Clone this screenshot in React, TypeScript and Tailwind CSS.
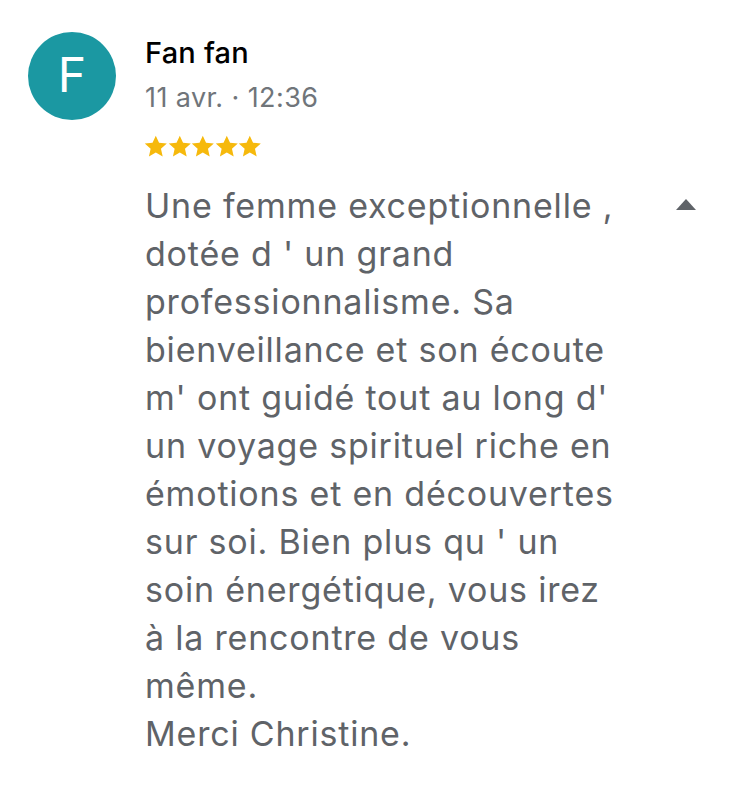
import React from "react";

const lines = [
  "Une femme exceptionnelle ,",
  "dotée d ' un grand",
  "professionnalisme. Sa",
  "bienveillance et son écoute",
  "m' ont guidé tout au long d'",
  "un voyage spirituel riche en",
  "émotions et en découvertes",
  "sur soi. Bien plus qu ' un",
  "soin énergétique, vous irez",
  "à la rencontre de vous",
  "même.",
  "Merci Christine.",
];

function Star() {
  return (
    <svg width="23.6" height="23" viewBox="0 0 24 23" className="shrink-0">
      <path
        d="M12 0.5l3.3 7.2 7.9.8-5.95 5.3 1.75 7.75L12 17.5 5 21.55l1.75-7.75L0.8 8.5l7.9-.8z"
        fill="#f6b90c"
      />
    </svg>
  );
}

export default function App() {
  return (
    <div
      className="w-[750px] h-[796px] bg-white relative"
      style={{ fontFamily: "Inter, Roboto, 'Noto Sans', sans-serif" }}
    >
      <div className="flex pt-[32px] pl-[28px]">
        <div className="w-[88px] h-[88px] rounded-full bg-[#1b98a2] flex items-center justify-center text-white text-[48px] leading-none shrink-0">
          <span className="-mt-[2px]">F</span>
        </div>
        <div className="ml-[29px] flex-1">
          <div className="text-[29px] leading-[36px] text-black font-medium mt-[3px] tracking-[0.2px]">Fan fan</div>
          <div className="text-[27px] leading-[34px] text-[#70757a] mt-[10px] tracking-[0.4px]">11 avr. · 12:36</div>
          <div className="flex mt-[20px] -ml-[1px]">
            <Star />
            <Star />
            <Star />
            <Star />
            <Star />
          </div>
          <div className="flex mt-[24px]">
            <div className="text-[34px] leading-[48px] text-[#5f6368] w-[530px] tracking-[0.8px]">
              {lines.map((l, i) => (
                <div key={i} className="whitespace-nowrap">
                  {l}
                </div>
              ))}
            </div>
            <div className="pt-[17px] pl-[0px]">
              <svg width="22" height="12" viewBox="0 0 22 12">
                <path d="M11 0L21 11H1z" fill="#5f6368" />
              </svg>
            </div>
          </div>
        </div>
      </div>
    </div>
  );
}
